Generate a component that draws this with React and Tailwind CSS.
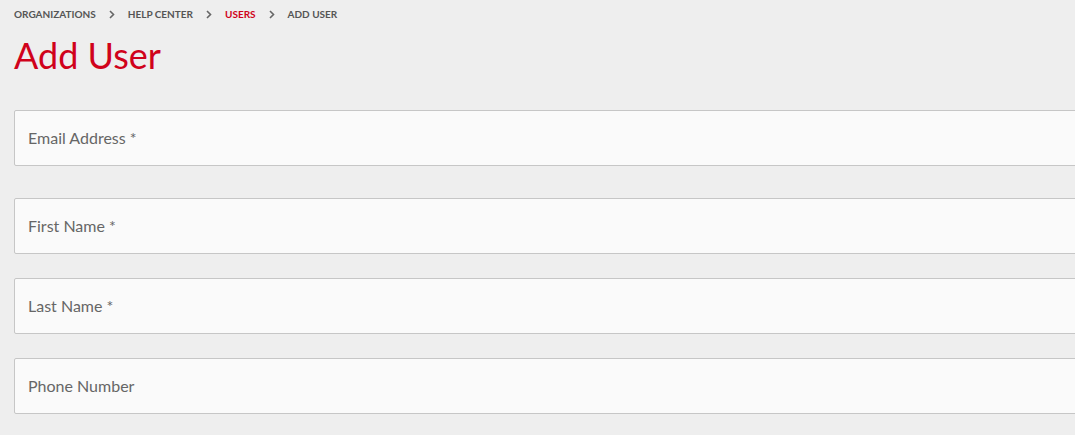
import React from 'react';

const crumbs = [
  { label: 'Organizations' },
  { label: 'Help Center' },
  { label: 'Users', active: true },
  { label: 'Add User' },
];

const fields = [
  { label: 'Email Address', required: true },
  { label: 'First Name', required: true },
  { label: 'Last Name', required: true },
  { label: 'Phone Number' },
];

const Chevron = () => (
  <svg width="6" height="9" viewBox="0 0 6 9" className="mx-[13px]">
    <path d="M1 1l3.5 3.5L1 8" fill="none" stroke="#666" strokeWidth="1.6" />
  </svg>
);

export default function App() {
  return (
    <div
      className="min-h-[435px] bg-[#eeeeee] overflow-hidden pl-[14px]"
      style={{ fontFamily: 'Lato, "Open Sans", sans-serif' }}
    >
      <nav className="flex items-center pt-[6px] h-[22px] text-[10px] font-bold uppercase text-[#555]">
        {crumbs.map((c, i) => (
          <React.Fragment key={c.label}>
            {i > 0 && <Chevron />}
            <span className={c.active ? 'text-[#d0021b]' : ''}>{c.label}</span>
          </React.Fragment>
        ))}
      </nav>
      <h1 className="text-[36px] leading-[44px] mt-[11px] text-[#d0021b] font-normal">Add User</h1>
      <form className="mt-[33px] flex flex-col w-[1100px]">
        {fields.map((f, i) => (
          <div
            key={f.label}
            className={`h-[56px] bg-[#fafafa] border border-[#c6c6c6] rounded-[2px] flex items-center px-[13px] ${
              i === 0 ? '' : i === 1 ? 'mt-[32px]' : 'mt-[24px]'
            }`}
          >
            <input
              placeholder={f.label + (f.required ? ' *' : '')}
              className="w-full bg-transparent outline-none text-[16px] text-[#555] placeholder:text-[#666]"
            />
          </div>
        ))}
      </form>
    </div>
  );
}
